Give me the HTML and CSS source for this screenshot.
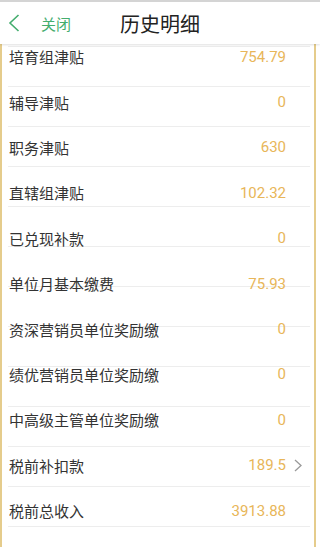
FILE: index.html
```html
<!DOCTYPE html>
<html lang="zh-CN">
<head>
    <meta charset="UTF-8">
    <meta name="viewport" content="width=device-width, initial-scale=1.0">
    <title>历史明细</title>
    <link rel="stylesheet" href="styles.css">
</head>
<body>
    <div class="header">
        <div class="back">
            <svg class="back-icon" width="12" height="18" viewBox="0 0 12 18">
                <path d="M10.5 1 L2 9 L10.5 17" fill="none" stroke="#44ad6e" stroke-width="1.6"/>
            </svg>
            <span class="close">关闭</span>
        </div>
        <div class="title">历史明细</div>
        <div></div>
    </div>

    <div class="content">
        <div class="list">
            <div class="row"><span class="label">培育组津贴</span><span class="value">754.79</span><span></span></div>
            <div class="row"><span class="label">辅导津贴</span><span class="value">0</span><span></span></div>
            <div class="row"><span class="label">职务津贴</span><span class="value">630</span><span></span></div>
            <div class="row"><span class="label">直辖组津贴</span><span class="value">102.32</span><span></span></div>
            <div class="row"><span class="label">已兑现补款</span><span class="value">0</span><span></span></div>
            <div class="row"><span class="label">单位月基本缴费</span><span class="value">75.93</span><span></span></div>
            <div class="row"><span class="label">资深营销员单位奖励缴</span><span class="value">0</span><span></span></div>
            <div class="row"><span class="label">绩优营销员单位奖励缴</span><span class="value">0</span><span></span></div>
            <div class="row"><span class="label">中高级主管单位奖励缴</span><span class="value">0</span><span></span></div>
            <div class="row">
                <span class="label">税前补扣款</span><span class="value">189.5</span>
                <svg class="arrow" width="8" height="13" viewBox="0 0 8 13">
                    <path d="M1 1 L7 6.5 L1 12" fill="none" stroke="#9a9a9a" stroke-width="1.3"/>
                </svg>
            </div>
            <div class="row"><span class="label">税前总收入</span><span class="value">3913.88</span><span></span></div>
        </div>
    </div>
</body>
</html>
```

FILE: styles.css
```css
html, body {
    margin: 0;
    padding: 0;
    height: 100%;
    overflow: hidden;
}
body {
    font-family: "Noto Sans CJK SC", "Noto Sans", sans-serif;
    background-color: #fff;
}
.header {
    position: relative;
    z-index: 2;
    height: 42px;
    border-top: 2px solid #d4d4d4;
    background-color: #fff;
    box-shadow: 0 1px 2px rgba(0, 0, 0, 0.12);
    display: grid;
    grid-template-columns: 1fr auto 1fr;
    align-items: center;
}
.back {
    display: flex;
    align-items: center;
    padding-left: 8px;
}
.back-icon {
    display: block;
}
.close {
    margin-left: 21px;
    color: #44ad6e;
    font-size: 15px;
}
.title {
    color: #222;
    font-size: 20px;
}
.content {
    height: calc(100% - 44px);
    overflow: hidden;
    margin-right: 4px;
    border-left: 2px solid #e5cc8c;
    border-right: 2px solid #e5cc8c;
}
/* separators every 40px, independent of the row height */
.list {
    margin-top: -10px;
    background: repeating-linear-gradient(to bottom, transparent 0 12px, #ededed 12px 13px, transparent 13px 40px) 6px 0 / calc(100% - 10px) 100% no-repeat;
}
.row {
    height: 45.4px;
    display: grid;
    grid-template-columns: 1fr auto 28px;
    align-items: center;
    padding-left: 7px;
}
.label {
    color: #333;
    font-size: 15px;
    white-space: nowrap;
}
.value {
    font-family: Roboto, "Liberation Sans", sans-serif;
    color: #e8b659;
    font-size: 15px;
}
.arrow {
    display: block;
    margin-left: 8px;
}
```
